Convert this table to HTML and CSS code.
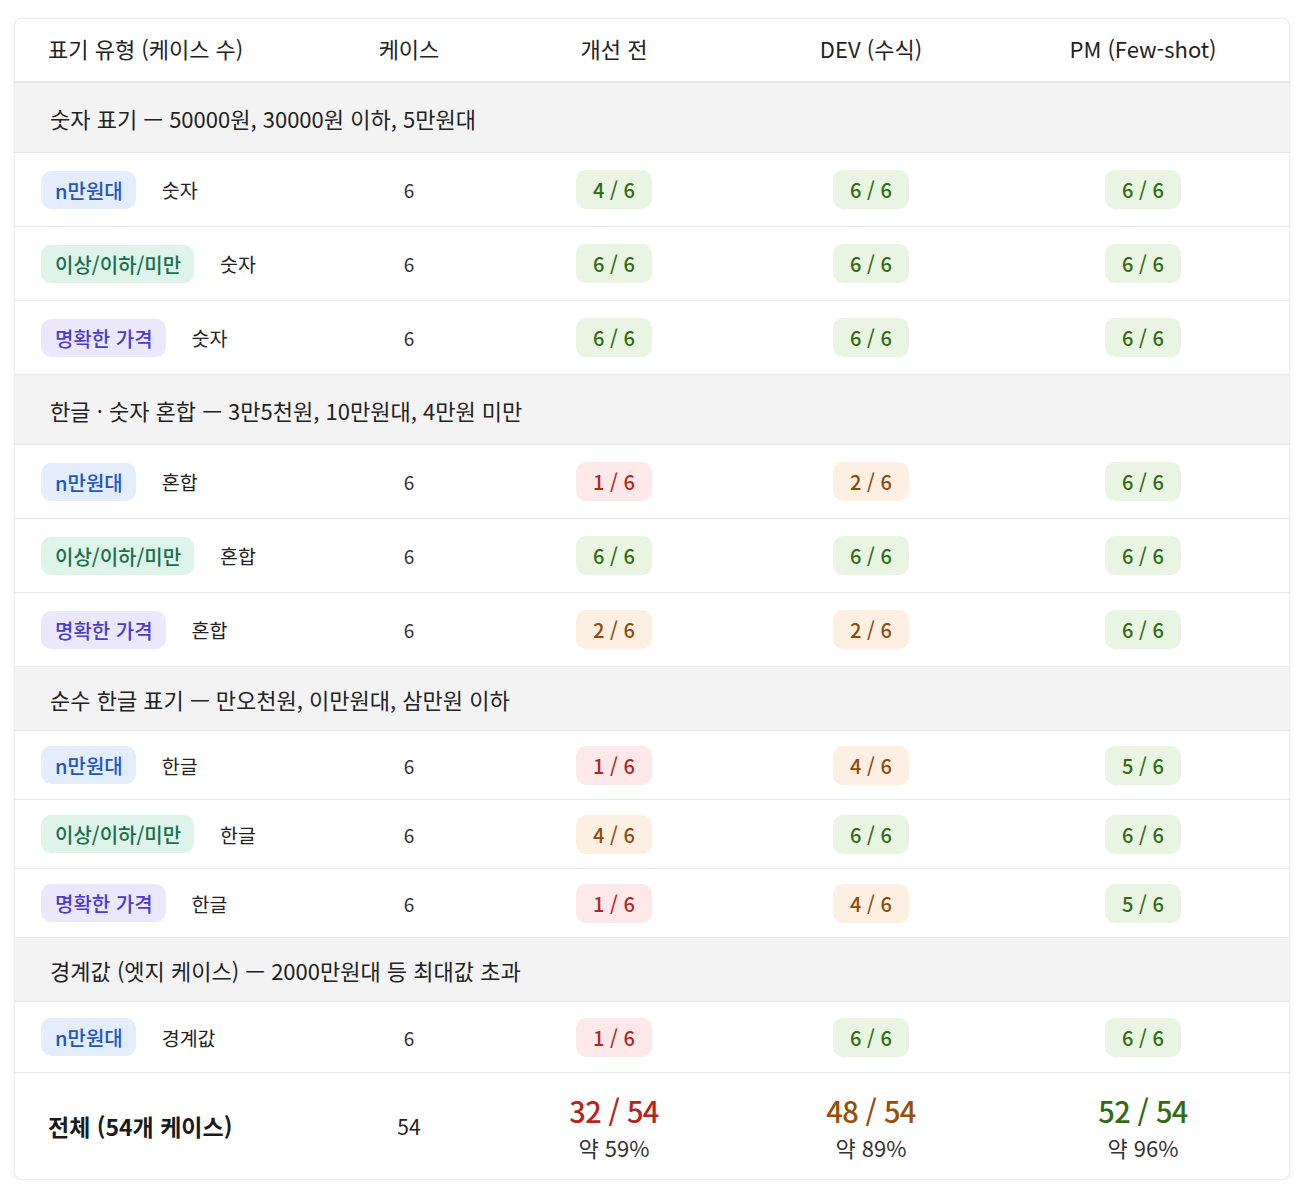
FILE: index.html
```html
<!DOCTYPE html>
<html lang="ko">
<head>
<meta charset="utf-8">
<link rel="stylesheet" href="styles.css">
</head>
<body>
<div class="card">
<table class="tbl">
<colgroup>
<col class="c1"><col class="c2"><col class="c3"><col class="c4"><col class="c5">
</colgroup>
<thead>
<tr class="head">
<th class="first">표기 유형 (케이스 수)</th><th>케이스</th><th>개선 전</th><th>DEV (수식)</th><th>PM (Few-shot)</th>
</tr>
</thead>
<tbody class="sec-wide">
<tr class="group"><td colspan="5">숫자 표기 — 50000원, 30000원 이하, 5만원대</td></tr>
<tr class="row"><td class="first"><div class="tc"><span class="tag blue">n만원대</span><span class="kind">숫자</span></div></td><td class="num">6</td><td><span class="sc ok">4 / 6</span></td><td><span class="sc ok">6 / 6</span></td><td><span class="sc ok">6 / 6</span></td></tr>
<tr class="row"><td class="first"><div class="tc"><span class="tag green">이상/이하/미만</span><span class="kind">숫자</span></div></td><td class="num">6</td><td><span class="sc ok">6 / 6</span></td><td><span class="sc ok">6 / 6</span></td><td><span class="sc ok">6 / 6</span></td></tr>
<tr class="row"><td class="first"><div class="tc"><span class="tag purple">명확한 가격</span><span class="kind">숫자</span></div></td><td class="num">6</td><td><span class="sc ok">6 / 6</span></td><td><span class="sc ok">6 / 6</span></td><td><span class="sc ok">6 / 6</span></td></tr>
</tbody>
<tbody class="sec-wide">
<tr class="group"><td colspan="5">한글 · 숫자 혼합 — 3만5천원, 10만원대, 4만원 미만</td></tr>
<tr class="row"><td class="first"><div class="tc"><span class="tag blue">n만원대</span><span class="kind">혼합</span></div></td><td class="num">6</td><td><span class="sc bad">1 / 6</span></td><td><span class="sc mid">2 / 6</span></td><td><span class="sc ok">6 / 6</span></td></tr>
<tr class="row"><td class="first"><div class="tc"><span class="tag green">이상/이하/미만</span><span class="kind">혼합</span></div></td><td class="num">6</td><td><span class="sc ok">6 / 6</span></td><td><span class="sc ok">6 / 6</span></td><td><span class="sc ok">6 / 6</span></td></tr>
<tr class="row"><td class="first"><div class="tc"><span class="tag purple">명확한 가격</span><span class="kind">혼합</span></div></td><td class="num">6</td><td><span class="sc mid">2 / 6</span></td><td><span class="sc mid">2 / 6</span></td><td><span class="sc ok">6 / 6</span></td></tr>
</tbody>
<tbody class="sec-narrow">
<tr class="group"><td colspan="5">순수 한글 표기 — 만오천원, 이만원대, 삼만원 이하</td></tr>
<tr class="row"><td class="first"><div class="tc"><span class="tag blue">n만원대</span><span class="kind">한글</span></div></td><td class="num">6</td><td><span class="sc bad">1 / 6</span></td><td><span class="sc mid">4 / 6</span></td><td><span class="sc ok">5 / 6</span></td></tr>
<tr class="row"><td class="first"><div class="tc"><span class="tag green">이상/이하/미만</span><span class="kind">한글</span></div></td><td class="num">6</td><td><span class="sc mid">4 / 6</span></td><td><span class="sc ok">6 / 6</span></td><td><span class="sc ok">6 / 6</span></td></tr>
<tr class="row"><td class="first"><div class="tc"><span class="tag purple">명확한 가격</span><span class="kind">한글</span></div></td><td class="num">6</td><td><span class="sc bad">1 / 6</span></td><td><span class="sc mid">4 / 6</span></td><td><span class="sc ok">5 / 6</span></td></tr>
</tbody>
<tbody class="sec-narrow last">
<tr class="group"><td colspan="5">경계값 (엣지 케이스) — 2000만원대 등 최대값 초과</td></tr>
<tr class="row"><td class="first"><div class="tc"><span class="tag blue">n만원대</span><span class="kind">경계값</span></div></td><td class="num">6</td><td><span class="sc bad">1 / 6</span></td><td><span class="sc ok">6 / 6</span></td><td><span class="sc ok">6 / 6</span></td></tr>
</tbody>
<tfoot>
<tr class="total">
<td class="first tlabel">전체 (54개 케이스)</td>
<td class="tnum">54</td>
<td><div class="big red">32 / 54</div><div class="pct">약 59%</div></td>
<td><div class="big orange">48 / 54</div><div class="pct">약 89%</div></td>
<td><div class="big dgreen">52 / 54</div><div class="pct">약 96%</div></td>
</tr>
</tfoot>
</table>
</div>
</body>
</html>
```
FILE: styles.css
```css
html, body {
  margin: 0;
  padding: 0;
  background: #ffffff;
}
body {
  font-family: "Noto Sans CJK KR", "Noto Sans", sans-serif;
  color: #222;
}
.card {
  margin: 18px 0 0 14px;
  width: 1276px;
  border: 1px solid #ececec;
  border-radius: 8px;
  box-shadow: 0 1px 4px rgba(0,0,0,0.06);
  overflow: hidden;
  box-sizing: border-box;
  background: #fff;
}
.tbl {
  width: 100%;
  border-collapse: collapse;
  table-layout: fixed;
}
.c1 { width: 320px; }
.c2 { width: 148px; }
.c3 { width: 262px; }
.c4 { width: 252px; }
.c5 { width: 292px; }
.tbl th, .tbl td {
  text-align: center;
  vertical-align: middle;
  padding: 0;
}
.head {
  height: 63px;
}
.head th {
  font-size: 22px;
  font-weight: 400;
  color: #222;
  border-bottom: 2px solid #e4e4e4;
  padding-bottom: 4px;
}
.head th.first {
  text-align: left;
  padding-left: 33px;
}
.group td {
  background: #f3f3f3;
  text-align: left;
  padding-left: 35px;
  font-size: 22px;
  color: #222;
  border-bottom: 1px solid #e6e6e6;
}
.sec-wide .group td { height: 69px; }
.sec-narrow .group td { height: 63px; }
.row td {
  border-bottom: 1px solid #e8e8e8;
}
.sec-wide .row td { height: 73px; }
.sec-narrow .row td { height: 68px; }
.sec-narrow.last .row td { height: 70px; }
.row td.first {
  text-align: left;
  padding-left: 26px;
}
.tc {
  display: flex;
  align-items: center;
  gap: 26px;
}
.tag {
  display: inline-block;
  box-sizing: border-box;
  font-size: 20px;
  font-weight: 500;
  line-height: 36px;
  height: 38px;
  padding: 2px 13px 0 14px;
  border-radius: 10px;
}
.tag.blue { background: #e3edfd; color: #1f55c0; }
.tag.green { background: #def3ea; color: #17704c; }
.tag.purple { background: #ebe8fd; color: #4a3bc9; }
.kind {
  font-size: 19.5px;
  color: #222;
}
.num {
  font-size: 19px;
  color: #333;
}
.sc {
  display: inline-block;
  width: 76px;
  height: 39px;
  line-height: 39px;
  border-radius: 10px;
  font-size: 20px;
  font-weight: 500;
  text-align: center;
}
.sc.ok { background: #e9f4e2; color: #2f6b12; }
.sc.bad { background: #fde9e9; color: #b3261e; }
.sc.mid { background: #fdf0e3; color: #8e4a0c; }
.total {
  height: 106px;
}
.total td {
  border-top: 1px solid #e4e4e4;
}
.tlabel {
  text-align: left !important;
  padding-left: 33px !important;
  font-size: 23px;
  font-weight: 600;
  color: #1a1a1a;
}
.tnum {
  font-size: 21px;
  color: #222;
}
.big {
  font-size: 29px;
  font-weight: 500;
  letter-spacing: -0.6px;
  line-height: 42px;
}
.big.red { color: #b3261e; }
.big.orange { color: #94500c; }
.big.dgreen { color: #2f6b12; }
.pct {
  font-size: 22px;
  color: #333;
  line-height: 32px;
}
```
